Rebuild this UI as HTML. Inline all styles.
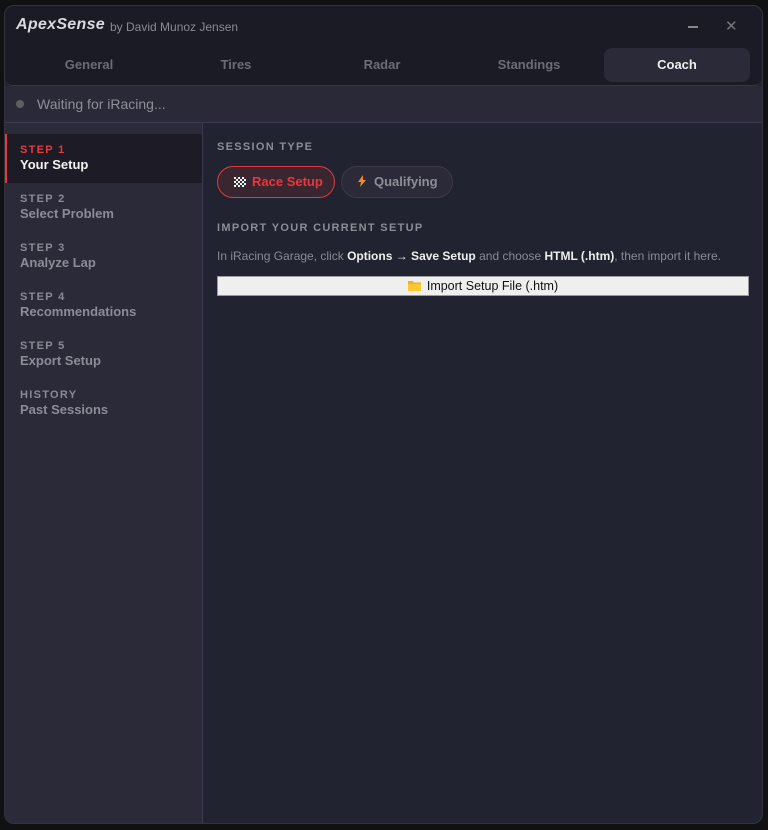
<!DOCTYPE html>
<html><head><meta charset="utf-8"><style>
*{box-sizing:border-box;margin:0;padding:0}
body{width:768px;height:830px;background:#111113;font-family:"Liberation Sans",sans-serif;position:relative;overflow:hidden}
.win{position:absolute;left:4px;top:5px;width:759px;height:819px;background:#222331;border:1px solid #33333f;border-radius:10px;overflow:hidden}
.title{position:absolute;left:0;top:0;width:100%;height:42px;background:#1b1b25}
.title .app{position:absolute;left:11px;top:10px;font-size:16px;font-weight:bold;font-style:italic;color:#d8d8e0;letter-spacing:0.3px}
.title .by{position:absolute;left:105px;top:14px;font-size:12px;color:#8a8a96}
.min{position:absolute;left:683px;top:20px;width:10px;height:1.5px;background:#888}
.x{position:absolute;left:720px;top:11px;font-size:15px;color:#777}
.tabs{position:absolute;left:0;top:42px;width:100%;height:38px;background:#1b1b25;border-bottom:1px solid #34344a;border-radius:0 0 8px 8px}
.tab{position:absolute;top:0;height:34px;line-height:34px;text-align:center;font-size:13px;font-weight:bold;color:#6c6c78;width:146px}
.tab.on{background:#2b2a38;color:#eee;border-radius:8px;left:599px}
.status{position:absolute;left:0;top:80px;width:100%;height:37px;background:#2a2937;border-bottom:1px solid #3a3a50}
.dot{position:absolute;left:11px;top:14px;width:8px;height:8px;border-radius:50%;background:#5e5e66}
.status span{position:absolute;left:32px;top:10px;font-size:14px;color:#8e8e98}
.side{position:absolute;left:0;top:117px;width:198px;height:702px;background:#2b2a39;border-right:1px solid #3a3a50}
.item{position:absolute;left:0;width:197px;height:49px;padding:10px 0 0 15px}
.item.on{background:#1c1b26;border-left:2px solid #e03a3e;padding-left:13px}
.item b{display:block;font-size:11px;letter-spacing:1.3px;color:#8a8a94}
.item.on b{color:#e8383c}
.item div{font-size:13px;font-weight:bold;color:#8c8c96;margin-top:1px}
.item.on div{color:#f2f2f2}
.h{position:absolute;left:212px;font-size:11px;font-weight:bold;letter-spacing:1.3px;color:#8c8c96}
.btn{position:absolute;top:160px;height:32px;border-radius:16px;font-size:13px;font-weight:bold;line-height:30px}
.race{left:212px;width:118px;background:#3a2630;border:1px solid #e03a3e;color:#e8383c;padding-left:16px}
.qual{left:336px;width:112px;background:#2b2a38;border:1px solid #3a3a4a;color:#8e8e98;padding-left:16px}
.p{position:absolute;left:212px;top:243px;font-size:12px;color:#8a8a94}
.p b{color:#eee}
.imp{position:absolute;left:212px;top:270px;width:532px;height:20px;background:#efeff0;border:1px solid #999;text-align:center;font-size:12.5px;line-height:18px;color:#111}
</style></head><body>
<div class="win">
 <div class="title"><span class="app">ApexSense</span><span class="by">by David Munoz Jensen</span><div class="min"></div><div class="x">✕</div></div>
 <div class="tabs">
  <div class="tab" style="left:11px">General</div>
  <div class="tab" style="left:158px">Tires</div>
  <div class="tab" style="left:304px">Radar</div>
  <div class="tab" style="left:451px">Standings</div>
  <div class="tab on">Coach</div>
 </div>
 <div class="status"><div class="dot"></div><span>Waiting for iRacing...</span></div>
 <div class="side">
  <div class="item on" style="top:11px"><b>STEP 1</b><div>Your Setup</div></div>
  <div class="item" style="top:60px"><b>STEP 2</b><div>Select Problem</div></div>
  <div class="item" style="top:109px"><b>STEP 3</b><div>Analyze Lap</div></div>
  <div class="item" style="top:158px"><b>STEP 4</b><div>Recommendations</div></div>
  <div class="item" style="top:207px"><b>STEP 5</b><div>Export Setup</div></div>
  <div class="item" style="top:256px"><b>HISTORY</b><div>Past Sessions</div></div>
 </div>
 <div class="h" style="top:135px">SESSION TYPE</div>
 <div class="btn race"><svg width="12" height="10" viewBox="0 0 12 10" style="vertical-align:-1px;margin-right:6px"><rect width="12" height="10" fill="#333"/><g fill="#eee"><rect x="0" y="0" width="2" height="2"/><rect x="4" y="0" width="2" height="2"/><rect x="8" y="0" width="2" height="2"/><rect x="2" y="2" width="2" height="2"/><rect x="6" y="2" width="2" height="2"/><rect x="10" y="2" width="2" height="2"/><rect x="0" y="4" width="2" height="2"/><rect x="4" y="4" width="2" height="2"/><rect x="8" y="4" width="2" height="2"/><rect x="2" y="6" width="2" height="2"/><rect x="6" y="6" width="2" height="2"/><rect x="10" y="6" width="2" height="2"/><rect x="0" y="8" width="2" height="2"/><rect x="4" y="8" width="2" height="2"/><rect x="8" y="8" width="2" height="2"/></g></svg>Race Setup</div>
 <div class="btn qual"><svg width="8" height="12" viewBox="0 0 8 12" style="vertical-align:-1px;margin-right:8px"><path d="M5 0L0 7h3l-1 5 6-7H5z" fill="#f08a24"/></svg>Qualifying</div>
 <div class="h" style="top:216px">IMPORT YOUR CURRENT SETUP</div>
 <div class="p">In iRacing Garage, click <b>Options → Save Setup</b> and choose <b>HTML (.htm)</b>, then import it here.</div>
 <div class="imp"><svg width="13" height="11" viewBox="0 0 13 11" style="vertical-align:-1px;margin-right:6px"><path d="M0 1h5l1 1.5h7V11H0z" fill="#f2b21c"/><path d="M0 4h13v7H0z" fill="#ffc82e"/></svg>Import Setup File (.htm)</div>
</div>
</body></html>
